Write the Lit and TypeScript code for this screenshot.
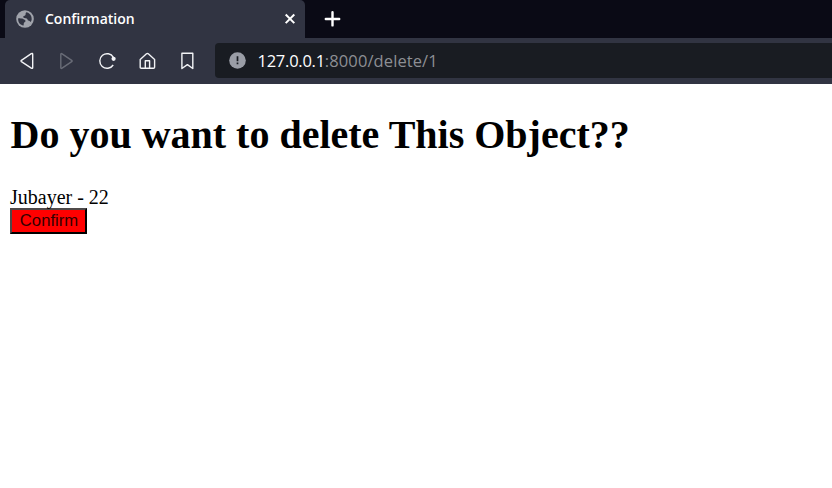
import { LitElement, html, css, svg } from "lit";
import { customElement, property } from "lit/decorators.js";

@customElement("browser-tabs")
class BrowserTabs extends LitElement {
  @property() label = "";
  static styles = css`
    :host { display: flex; height: 38px; background: #0a0a15; padding-left: 5px; font-family: "Open Sans", "Noto Sans", sans-serif; }
    .tab { display: flex; align-items: center; box-sizing: border-box; width: 300px; height: 38px; padding: 0 9px 0 11px; background: #313442; border-radius: 5px 5px 0 0; color: #fff; }
    .title { flex: 1; margin-left: 11px; font-size: 14px; font-weight: 600; line-height: 20px; letter-spacing: 0; white-space: nowrap; }
    svg { display: block; flex: none; }
    .add { align-self: center; margin-left: 19px; }
  `;
  render() {
    return html`
      <div class="tab">
        <svg width="18" height="18" viewBox="0 0 18 18">
          <circle cx="9" cy="9" r="8.8" fill="#a0a3ab" />
          <path d="M2.2 8.2 C4 8.4 6.2 8.2 7.2 9 C8.2 9.8 9.5 9.8 9.5 11 C9.5 12.2 8 12.2 7.8 13.2 L7.6 15.5 C3.6 14.8 1.8 11.8 2.2 8.2Z" fill="#313442" />
          <path d="M10.3 2.3 C13.4 2.8 15.8 5.5 15.7 9.2 C15.6 10.3 15.2 11.4 14.6 12 C13.8 11.4 13.5 10.6 12.3 10.5 C11.4 10.4 11.7 8.8 10.7 8.5 C9.5 8.1 7.4 8.2 7.2 7 C7 5.8 9.1 6 9.5 5 C9.8 4.2 9.2 3.2 10.3 2.3Z" fill="#313442" />
        </svg>
        <span class="title">${this.label}</span>
        <svg width="12" height="12" viewBox="0 0 12 12"><path d="M1.7 1.5 10.3 10.1M10.3 1.5 1.7 10.1" stroke="#fff" stroke-width="2" /></svg>
      </div>
      <svg class="add" width="18" height="18" viewBox="0 0 18 18"><path d="M8.5 2.2V15.4M1.8 9H15.2" stroke="#fff" stroke-width="2.4" stroke-linecap="round" /></svg>
    `;
  }
}

const icons = [
  svg`<path d="M12.3 2.7 2.4 9.4Q1.6 10 2.4 10.6L12.3 17.1Q13.7 18 13.7 16.4V3.4Q13.7 1.8 12.3 2.7Z" />`,
  svg`<path class="dim" d="M1.8 3.4V16.6Q1.8 18 3.1 17.2L12.7 10.7Q13.5 10 12.7 9.3L3.1 2.8Q1.8 2 1.8 3.4Z" />`,
  svg`<path d="M14.2 14A7.3 7.3 0 1 1 14.4 6.3" /><circle class="dot" cx="14.6" cy="7.8" r="2.1" />`,
  svg`<path d="M1.2 8.4 7.5 2.8Q8.4 2.1 9.3 2.8L15.6 8.4V16.2Q15.6 17.3 14.5 17.3H2.3Q1.2 17.3 1.2 16.2ZM6.3 17.3V9.8H10.6V17.3" />`,
  svg`<path d="M2.9 2.3H13.8V17.5L8.4 13.6 2.9 17.5Z" />`,
];

@customElement("browser-toolbar")
class BrowserToolbar extends LitElement {
  @property() host = "";
  @property() path = "";
  static styles = css`
    :host { display: flex; align-items: center; box-sizing: border-box; height: 46px; padding: 0 0 1px 19px; background: #313442; font-family: "Open Sans", "Noto Sans", sans-serif; }
    .nav { display: flex; gap: 22px; flex: none; }
    svg { display: block; flex: none; }
    .nav svg { fill: none; stroke: #f2f3f6; stroke-width: 1.4; stroke-linejoin: round; }
    .nav .dim { stroke: #696c77; }
    .nav .dot { fill: #f2f3f6; stroke: none; }
    .address { display: flex; align-items: center; flex: 1; height: 35px; margin-left: 18px; padding-left: 14px; background: #191c22; border-radius: 4px 0 0 4px; }
    .url { margin-left: 11.5px; font-size: 16.5px; line-height: 24px; color: #8d8f94; white-space: nowrap; letter-spacing: 0.1px; }
    .url b { font-weight: 400; color: #fff; letter-spacing: -0.25px; }
  `;
  render() {
    return html`
      <div class="nav">${icons.map((i) => html`<svg width="18" height="20" viewBox="0 0 18 20">${i}</svg>`)}</div>
      <div class="address">
        <svg width="17" height="17" viewBox="0 0 17 17"><circle cx="8.5" cy="8.5" r="8.3" fill="#9a9da6" /><path d="M8.5 4.2V9.2M8.5 10.6V12.2" stroke="#191c22" stroke-width="1.7" /></svg>
        <span class="url"><b>${this.host}</b>${this.path}</span>
      </div>
    `;
  }
}

@customElement("app-root")
class AppRoot extends LitElement {
  static styles = css`
    :host { display: block; height: 488px; overflow: hidden; background: #fff; color: #000; font-family: "Liberation Serif", serif; }
    main { padding: 0 10px; }
    h1 { margin: 0; padding: 28px 0 0 0.5px; font-size: 40px; line-height: 46px; font-weight: 700; white-space: nowrap; }
    p { margin: 0; padding-top: 28px; font-size: 20px; line-height: 22px; }
    button { display: block; box-sizing: border-box; width: 77px; height: 26px; padding: 0 0 0 1px; border: 2px solid; border-color: #4f4a4a #000 #000 #4f4a4a; background: #f00; color: #300; font: 16.67px/20px "Liberation Sans", sans-serif; }
  `;
  render() {
    return html`
      <browser-tabs label="Confirmation"></browser-tabs>
      <browser-toolbar host="127.0.0.1" path=":8000/delete/1"></browser-toolbar>
      <main>
        <h1>Do you want to delete This Object??</h1>
        <p>Jubayer - 22</p>
        <button>Confirm</button>
      </main>
    `;
  }
}
